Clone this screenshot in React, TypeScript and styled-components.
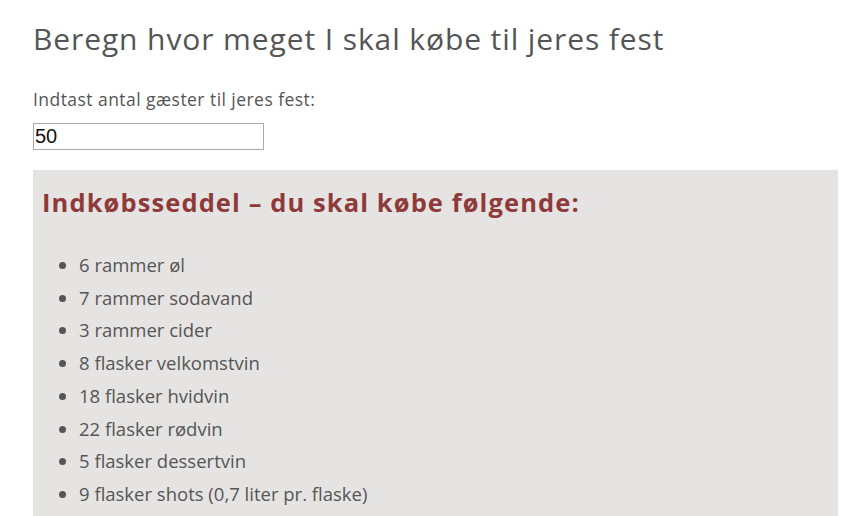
import React from "react";
import styled, { createGlobalStyle } from "styled-components";

const Global = createGlobalStyle`
  html, body { margin: 0; padding: 0; background: #fff; }
  body { font-family: "Open Sans", "Noto Sans", sans-serif; color: #555; }
`;

const Page = styled.div`
  padding: 18px 22px 0 33px;
  display: flex;
  flex-direction: column;
`;

const Title = styled.h1`
  margin: 0;
  font-size: 30px;
  font-weight: 400;
  line-height: 42px;
  color: #555;
  letter-spacing: 0.9px;
`;

const Label = styled.label`
  margin-top: 27px;
  font-size: 17.5px;
  line-height: 24px;
  color: #555;
  letter-spacing: 0.45px;
`;

const Input = styled.input`
  margin-top: 12px;
  width: 231px;
  height: 27px;
  box-sizing: border-box;
  border: 1px solid #aaa;
  padding: 1px 1px;
  font-family: "Liberation Sans", Arial, sans-serif;
  font-size: 20px;
  color: #111;
  outline: none;
`;

const Panel = styled.section`
  margin-top: 20px;
  background: #e6e4e3;
  padding: 14px 9px 12px 9px;
  min-height: 340px;
`;

const Heading = styled.h2`
  margin: 0;
  font-size: 25.5px;
  font-weight: 700;
  line-height: 36px;
  color: #8f3a3a;
  letter-spacing: 1.1px;
`;

const List = styled.ul`
  margin: 29px 0 0 0;
  padding-left: 37px;
`;

const Item = styled.li`
  font-size: 18.5px;
  line-height: 32.7px;
  color: #555;
`;

const items = [
  "6 rammer øl",
  "7 rammer sodavand",
  "3 rammer cider",
  "8 flasker velkomstvin",
  "18 flasker hvidvin",
  "22 flasker rødvin",
  "5 flasker dessertvin",
  "9 flasker shots (0,7 liter pr. flaske)",
];

export default function App() {
  return (
    <>
      <Global />
      <Page>
        <Title>Beregn hvor meget I skal købe til jeres fest</Title>
        <Label htmlFor="guests">Indtast antal gæster til jeres fest:</Label>
        <Input id="guests" type="text" defaultValue="50" />
        <Panel>
          <Heading>Indkøbsseddel – du skal købe følgende:</Heading>
          <List>
            {items.map((t) => (
              <Item key={t}>{t}</Item>
            ))}
          </List>
        </Panel>
      </Page>
    </>
  );
}
